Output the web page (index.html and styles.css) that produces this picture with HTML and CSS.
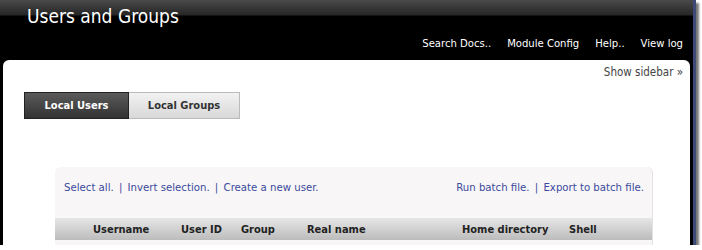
FILE: index.html
```html
<!DOCTYPE html>
<html lang="en">
<head>
    <meta charset="UTF-8">
    <title>Users and Groups</title>
    <link rel="stylesheet" href="styles.css">
</head>
<body>
    <div class="frame">
        <div class="header">
            <h1>Users and Groups</h1>
            <div class="nav">
                <a href="#">Search Docs..</a>
                <a href="#">Module Config</a>
                <a href="#">Help..</a>
                <a href="#">View log</a>
            </div>
        </div>

        <div class="content">
            <div class="sidebar-toggle"><a href="#">Show sidebar &raquo;</a></div>

            <div class="tabs">
                <a href="#" class="tab active">Local Users</a>
                <a href="#" class="tab">Local Groups</a>
            </div>

            <div class="panel">
                <div class="actions">
                    <div class="links">
                        <a href="#">Select all.</a> <span class="sep">|</span>
                        <a href="#">Invert selection.</a> <span class="sep">|</span>
                        <a href="#">Create a new user.</a>
                    </div>
                    <div class="links">
                        <a href="#">Run batch file.</a> <span class="sep">|</span>
                        <a href="#">Export to batch file.</a>
                    </div>
                </div>

                <table class="users">
                    <colgroup>
                        <col style="width: 33px">
                        <col style="width: 88px">
                        <col style="width: 60px">
                        <col style="width: 66px">
                        <col style="width: 155px">
                        <col style="width: 107px">
                        <col>
                    </colgroup>
                    <thead>
                        <tr>
                            <th></th>
                            <th>Username</th>
                            <th>User ID</th>
                            <th>Group</th>
                            <th>Real name</th>
                            <th>Home directory</th>
                            <th>Shell</th>
                        </tr>
                    </thead>
                </table>
            </div>
        </div>
    </div>
</body>
</html>
```

FILE: styles.css
```css
body {
    margin: 0;
    background-color: #fff;
    font-family: 'DejaVu Sans Condensed', 'Liberation Sans', sans-serif;
    overflow: hidden;
}

a {
    text-decoration: none;
}

.frame {
    width: 693px;
    height: 245px;
    background-color: #000;
    border-right: 3px solid #3d4a78;
    box-shadow: 3px 3px 2px #777;
    overflow: hidden;
}

.header {
    height: 60px;
    background: linear-gradient(#4a4a4a 0, #262626 15px, #000 16px);
    display: flex;
    flex-direction: column;
    justify-content: space-between;
}

h1 {
    margin: 0;
    padding: 5px 0 0 27px;
    font-size: 19px;
    font-weight: normal;
    color: #fff;
}

.nav {
    display: flex;
    justify-content: flex-end;
    gap: 16px;
    padding: 0 10px 10px 0;
    font-size: 11.2px;
}

.nav a {
    color: #fff;
}

.content {
    height: 185px;
    margin-left: 3px;
    margin-right: 3px;
    background-color: #fff;
    border-radius: 6px 6px 0 0;
}

.sidebar-toggle {
    text-align: right;
    padding: 5px 7px 0 0;
    font-size: 11.5px;
}

.sidebar-toggle a {
    color: #444;
}

.tabs {
    display: flex;
    margin: 13px 0 0 21px;
}

.tab {
    width: 103px;
    height: 25px;
    line-height: 25px;
    text-align: center;
    font-size: 11px;
    font-weight: bold;
    color: #333;
    background: linear-gradient(#f2f2f2, #d8d8d8);
    border: 1px solid #bbb;
}

.tab + .tab {
    width: 110px;
    border-left: none;
}

.tab.active {
    color: #fff;
    background: linear-gradient(#5a5a5a, #333);
    border-color: #222;
}

.panel {
    margin: 48px 0 0 52px;
    width: 597px;
    height: 100px;
    background-color: #f8f6f6;
    border-radius: 6px 6px 0 0;
    border-right: 1px solid #e4e2e2;
}

.actions {
    display: flex;
    justify-content: space-between;
    padding: 14px 8px 0 9px;
    height: 37px;
    font-size: 11.3px;
}

.links a {
    color: #3b4a9e;
}

.sep {
    color: #3b4a9e;
    padding: 0 2px;
}

.users {
    width: 597px;
    border-collapse: collapse;
    table-layout: fixed;
}

.users th {
    height: 22px;
    padding: 0 0 0 5px;
    text-align: left;
    font-size: 11px;
    font-weight: bold;
    color: #222;
    background: linear-gradient(#e6e6e6, #bcbcbc);
}
```
